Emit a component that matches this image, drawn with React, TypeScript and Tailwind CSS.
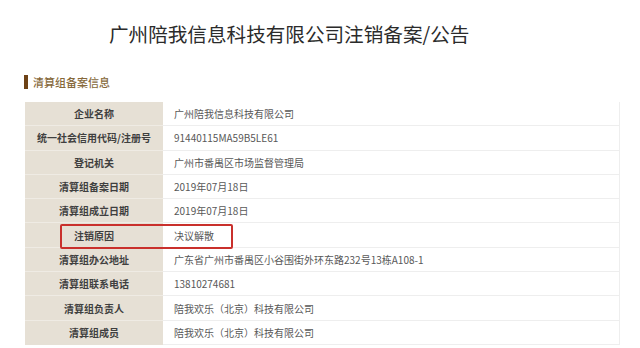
import React from "react";

const rows: [string, string][] = [
  ["企业名称", "广州陪我信息科技有限公司"],
  ["统一社会信用代码/注册号", "91440115MA59B5LE61"],
  ["登记机关", "广州市番禺区市场监督管理局"],
  ["清算组备案日期", "2019年07月18日"],
  ["清算组成立日期", "2019年07月18日"],
  ["注销原因", "决议解散"],
  ["清算组办公地址", "广东省广州市番禺区小谷围街外环东路232号13栋A108-1"],
  ["清算组联系电话", "13810274681"],
  ["清算组负责人", "陪我欢乐（北京）科技有限公司"],
  ["清算组成员", "陪我欢乐（北京）科技有限公司"],
];

export default function App() {
  return (
    <div
      className="relative w-[640px] h-[348px] overflow-hidden bg-white"
      style={{ fontFamily: '"Noto Sans CJK SC", "Noto Sans", sans-serif' }}
    >
      <div className="pt-[20px] pl-[109px] text-[19.6px] leading-[28px] text-[#2b2b2b]">
        广州陪我信息科技有限公司注销备案/公告
      </div>
      <div className="mt-[26px] ml-[24px] flex items-center h-[16px]">
        <div className="w-[4px] h-[14px] bg-[#6e4216]" />
        <div className="ml-[5px] text-[11px] leading-[16px] font-medium text-[#86683a]">清算组备案信息</div>
      </div>
      <div className="mt-[12px] ml-[25px] w-[595px] border-r border-[#eeeeee]">
        {rows.map(([k, v], i) => (
          <div key={i} className="flex h-[24.3px]">
            <div
              className={`w-[138px] shrink-0 flex items-center justify-center bg-[#e6e0d5] text-[10px] font-semibold text-[#3f3f3f] ${
                i < rows.length - 1 ? "border-b border-[#efebe4]" : ""
              }`}
            >
              {k}
            </div>
            <div className="flex-1 flex items-center pl-[11px] border-b border-[#eeeeee] text-[10px] text-[#585858]">
              {v}
            </div>
          </div>
        ))}
      </div>
      <div className="absolute left-[60px] top-[224px] w-[173px] h-[25px] border-2 border-[#c9302c] rounded-[2px]" />
    </div>
  );
}
